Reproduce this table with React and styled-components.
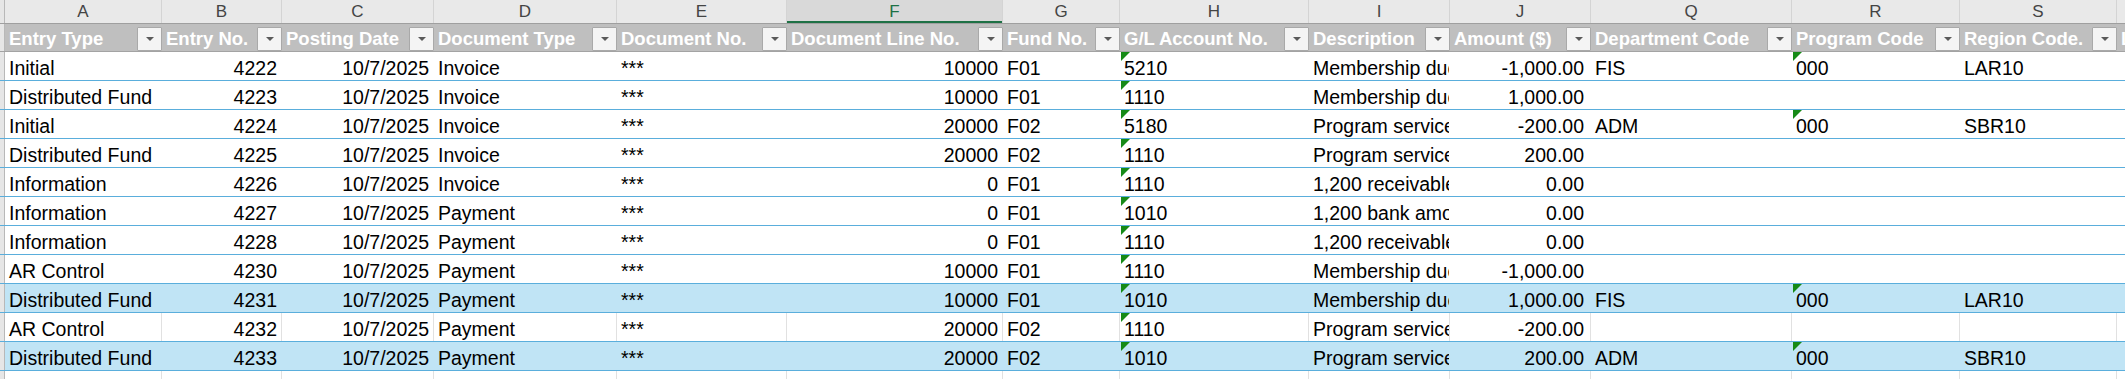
import React from "react";
import styled, { createGlobalStyle, css } from "styled-components";

const GlobalStyle = createGlobalStyle`
  body {
    margin: 0;
    background: #ffffff;
    font-family: "Liberation Sans", Arial, sans-serif;
    overflow: hidden;
  }
`;

const columns = [
  { key: "A", w: 157, label: "Entry Type" },
  { key: "B", w: 120, label: "Entry No.", align: "right" },
  { key: "C", w: 152, label: "Posting Date", align: "right" },
  { key: "D", w: 183, label: "Document Type" },
  { key: "E", w: 170, label: "Document No." },
  { key: "F", w: 216, label: "Document Line No.", align: "right" },
  { key: "G", w: 117, label: "Fund No." },
  { key: "H", w: 189, label: "G/L Account No.", flag: true },
  { key: "I", w: 141, label: "Description" },
  { key: "J", w: 141, label: "Amount ($)", align: "right", pr: 6 },
  { key: "Q", w: 201, label: "Department Code" },
  { key: "R", w: 168, label: "Program Code", flag: true },
  { key: "S", w: 157, label: "Region Code." },
  { key: "T", w: 60, label: "Location Code" },
];

const rows = [
  { cells: ["Initial", "4222", "10/7/2025", "Invoice", "***", "10000", "F01", "5210", "Membership dues", "-1,000.00", "FIS", "000", "LAR10", ""] },
  { cells: ["Distributed Fund", "4223", "10/7/2025", "Invoice", "***", "10000", "F01", "1110", "Membership dues", "1,000.00", "", "", "", ""] },
  { cells: ["Initial", "4224", "10/7/2025", "Invoice", "***", "20000", "F02", "5180", "Program services", "-200.00", "ADM", "000", "SBR10", ""] },
  { cells: ["Distributed Fund", "4225", "10/7/2025", "Invoice", "***", "20000", "F02", "1110", "Program services", "200.00", "", "", "", ""] },
  { cells: ["Information", "4226", "10/7/2025", "Invoice", "***", "0", "F01", "1110", "1,200 receivable", "0.00", "", "", "", ""] },
  { cells: ["Information", "4227", "10/7/2025", "Payment", "***", "0", "F01", "1010", "1,200 bank amount", "0.00", "", "", "", ""] },
  { cells: ["Information", "4228", "10/7/2025", "Payment", "***", "0", "F01", "1110", "1,200 receivable", "0.00", "", "", "", ""] },
  { cells: ["AR Control", "4230", "10/7/2025", "Payment", "***", "10000", "F01", "1110", "Membership dues", "-1,000.00", "", "", "", ""] },
  { cells: ["Distributed Fund", "4231", "10/7/2025", "Payment", "***", "10000", "F01", "1010", "Membership dues", "1,000.00", "FIS", "000", "LAR10", ""], hl: true },
  { cells: ["AR Control", "4232", "10/7/2025", "Payment", "***", "20000", "F02", "1110", "Program services", "-200.00", "", "", "", ""], grid: true },
  { cells: ["Distributed Fund", "4233", "10/7/2025", "Payment", "***", "20000", "F02", "1010", "Program services", "200.00", "ADM", "000", "SBR10", ""], hl: true },
];

const Sheet = styled.div`
  width: 2125px;
  height: 379px;
  overflow: hidden;
  background: #ffffff;
`;

const Line = styled.div`
  display: flex;
  width: max-content;
`;

const Stub = styled.div`
  width: 5px;
  flex-shrink: 0;
  box-sizing: border-box;
  background: #e6e6e6;
  border-right: 1px solid #b8b8b8;
`;

const LetterRow = styled(Line)`
  height: 24px;
  box-sizing: border-box;
  border-bottom: 1px solid #9f9f9f;
  background: #e9e9e9;
`;

const Letter = styled.div`
  width: ${(p) => p.$w}px;
  flex-shrink: 0;
  box-sizing: border-box;
  border-right: 1px solid #d4d4d4;
  text-align: center;
  font-size: 17px;
  line-height: 23px;
  color: #444444;
  ${(p) =>
    p.$selected &&
    css`
      background: #d9d9d9;
      color: #1e7145;
      box-shadow: inset 0 -2px 0 #1e7145;
    `}
`;

const HeadRow = styled(Line)`
  height: 28px;
  box-sizing: border-box;
  border-bottom: 1px solid #a3a3a3;
  background: #bfbfbf;
`;

const HeadCell = styled.div`
  width: ${(p) => p.$w}px;
  flex-shrink: 0;
  display: flex;
  align-items: flex-end;
  overflow: hidden;
`;

const HeadLabel = styled.div`
  flex: 1;
  min-width: 0;
  align-self: stretch;
  padding: 3px 0 0 4px;
  overflow: hidden;
  white-space: nowrap;
  font-size: 18.5px;
  line-height: 23px;
  font-weight: bold;
  color: #ffffff;
`;

const FilterButton = styled.div`
  width: 25px;
  height: 24px;
  flex-shrink: 0;
  box-sizing: border-box;
  border: 1px solid #a9a9a9;
  border-radius: 1px;
  background: #f4f4f4;
  display: flex;
  align-items: center;
  justify-content: center;

  &::after {
    content: "";
    border-left: 4px solid transparent;
    border-right: 4px solid transparent;
    border-top: 4px solid #5a5a5a;
  }
`;

const BodyRow = styled(Line)`
  height: 29px;
  box-sizing: border-box;
  border-bottom: 1px solid #5aaedc;
  background: ${(p) => (p.$hl ? "#c0e4f5" : "#ffffff")};
`;

const Cell = styled.div`
  position: relative;
  width: ${(p) => p.$w}px;
  flex-shrink: 0;
  box-sizing: border-box;
  padding: 4px ${(p) => p.$pr ?? 4}px 0 4px;
  overflow: hidden;
  white-space: nowrap;
  text-align: ${(p) => p.$align || "left"};
  font-size: 19.5px;
  line-height: 24px;
  color: #000000;
  border-right: 1px solid ${(p) => (p.$grid ? "#e1e1e1" : "transparent")};

  ${(p) =>
    p.$flag &&
    css`
      &::before {
        content: "";
        position: absolute;
        left: 1px;
        top: 0;
        border-top: 9px solid #168a16;
        border-right: 9px solid transparent;
      }
    `}
`;

const Tail = styled(Line)`
  height: 20px;
`;

const TailCell = styled.div`
  width: ${(p) => p.$w}px;
  flex-shrink: 0;
  box-sizing: border-box;
  border-right: 1px solid #e1e1e1;
`;

function App() {
  return (
    <Sheet>
      <GlobalStyle />
      <LetterRow>
        <Stub />
        {columns.map((c) => (
          <Letter key={c.key} $w={c.w} $selected={c.key === "F"}>
            {c.key}
          </Letter>
        ))}
      </LetterRow>
      <HeadRow>
        <Stub />
        {columns.map((c) => (
          <HeadCell key={c.key} $w={c.w}>
            <HeadLabel>{c.label}</HeadLabel>
            <FilterButton />
          </HeadCell>
        ))}
      </HeadRow>
      {rows.map((r, i) => (
        <BodyRow key={i} $hl={r.hl}>
          <Stub />
          {columns.map((c, j) => (
            <Cell
              key={c.key}
              $w={c.w}
              $align={c.align}
              $pr={c.pr}
              $grid={r.grid}
              $flag={c.flag && r.cells[j] !== ""}
            >
              {r.cells[j]}
            </Cell>
          ))}
        </BodyRow>
      ))}
      <Tail>
        <Stub />
        {columns.map((c) => (
          <TailCell key={c.key} $w={c.w} />
        ))}
      </Tail>
    </Sheet>
  );
}

export default App;
